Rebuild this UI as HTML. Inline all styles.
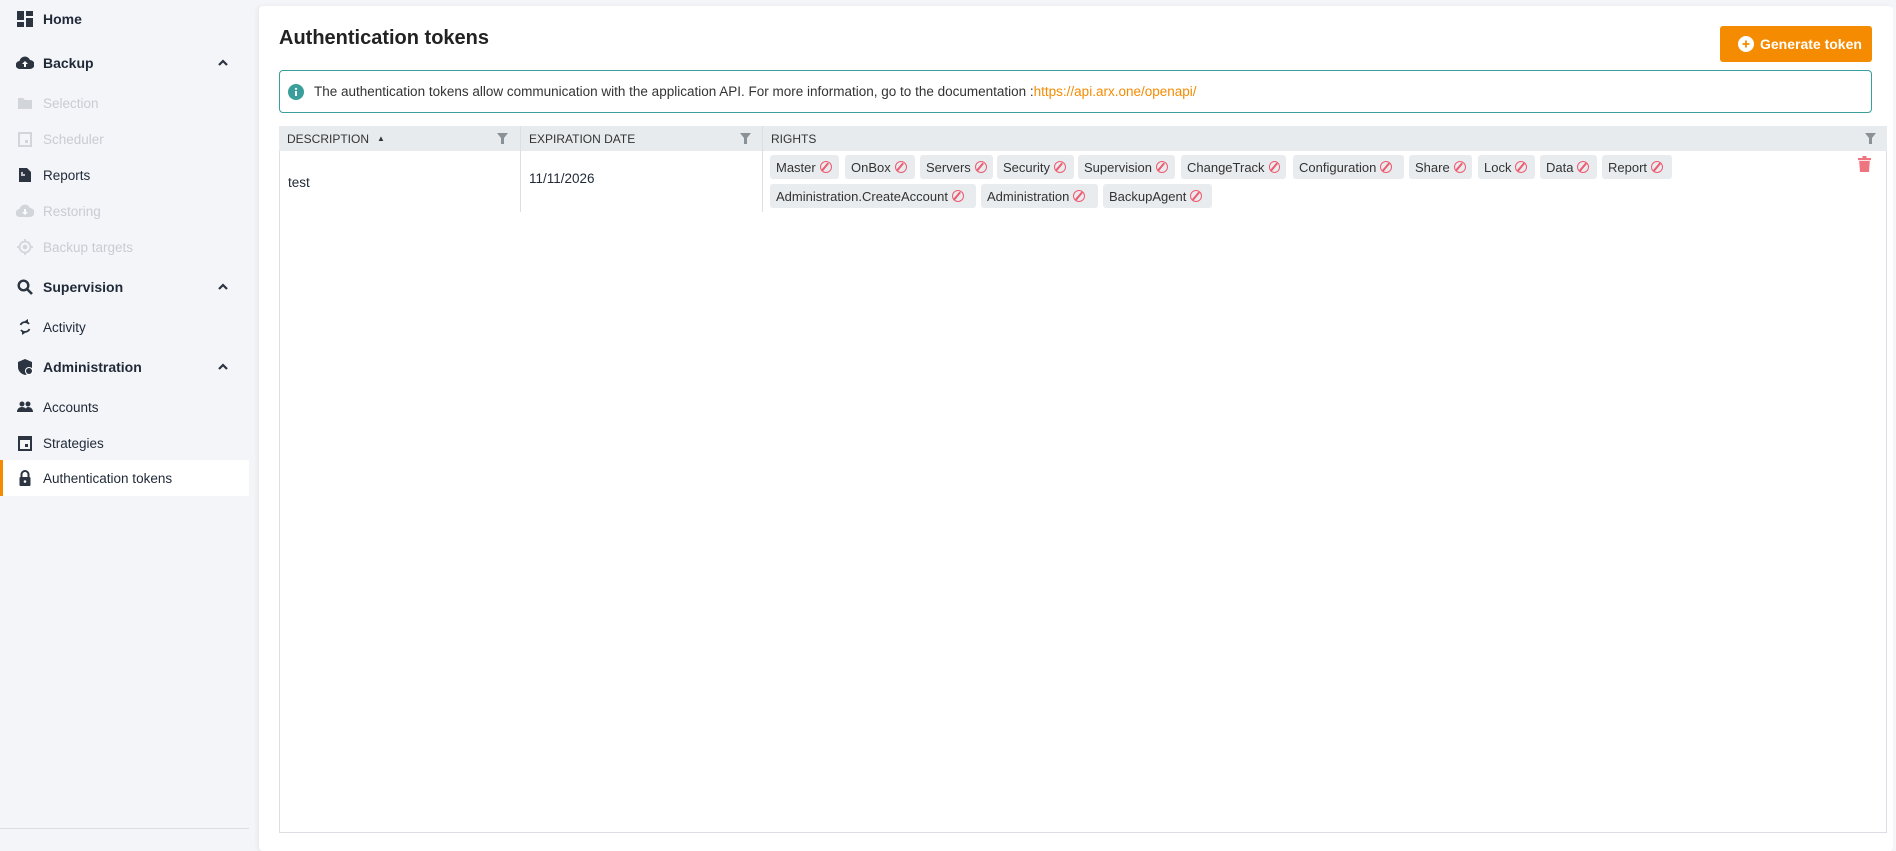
<!DOCTYPE html>
<html><head><meta charset="utf-8"><style>
*{box-sizing:border-box;margin:0;padding:0}
body{width:1896px;height:842px;background:#f4f5f9;font-family:"Liberation Sans",sans-serif;color:#1f2937;position:relative;overflow:hidden;font-size:13.5px}
.si{position:absolute;left:0;width:249px;height:36px;display:flex;align-items:center}
.si svg{position:absolute;left:16px;width:18px;height:18px}
.si span{position:absolute;left:43px}
.si.b span{font-weight:bold;font-size:14px}
.si.d{color:#c8ccd2}
.si .chev{position:absolute;left:217px;width:12px;height:12px}
.active{background:#fff;border-left:3px solid #f58b00}
.card{position:absolute;left:259px;top:6px;width:1634px;height:845px;background:#fff;border-radius:4px;box-shadow:-2px 0 4px rgba(0,0,0,.05)}
.chip{position:absolute;height:24px;background:#e9ecef;border-radius:3px;font-size:13px;display:flex;align-items:center;padding:0 6px;white-space:nowrap;color:#333}
.chip i{display:inline-block;width:12px;height:12px;border:1.7px solid #ee5a6f;border-radius:50%;margin-left:4px;position:relative}
.chip i:after{content:"";position:absolute;left:3.5px;top:-0.5px;width:1.7px;height:10px;background:#ee5a6f;transform:rotate(40deg)}
.th{position:absolute;top:126px;height:25px;background:#e8ebee;font-size:12px;color:#333;display:flex;align-items:center;padding-left:8px}
.flt{position:absolute;top:133px;width:11px;height:11px}
</style></head><body>
<div class="si b" style="top:1px"><svg viewBox="0 0 18 18"><rect x="1" y="1" width="7" height="9" fill="#2b3440"/><rect x="10" y="1" width="7" height="5" fill="#2b3440"/><rect x="1" y="12" width="7" height="5" fill="#2b3440"/><rect x="10" y="8" width="7" height="9" fill="#2b3440"/></svg><span>Home</span></div>
<div class="si b" style="top:45px"><svg viewBox="0 0 18 18"><path d="M4 15a4 4 0 0 1-.5-8A5.5 5.5 0 0 1 14 6a4.5 4.5 0 0 1 0 9z" fill="#2b3440"/><path d="M9 7l-3 3h2v3h2v-3h2z" fill="#fff"/></svg><span>Backup</span><svg class="chev" viewBox="0 0 12 12"><path d="M2 8l4-4 4 4" stroke="#2b3440" stroke-width="2.2" fill="none"/></svg></div>
<div class="si d" style="top:85px"><svg viewBox="0 0 18 18"><path d="M2 4h5l2 2h7v9H2z" fill="#d2d5da"/></svg><span>Selection</span></div>
<div class="si d" style="top:121px"><svg viewBox="0 0 18 18"><rect x="3" y="3" width="12" height="13" fill="none" stroke="#d2d5da" stroke-width="2"/><rect x="9" y="10" width="3" height="3" fill="#d2d5da"/></svg><span>Scheduler</span></div>
<div class="si" style="top:157px"><svg viewBox="0 0 18 18"><path d="M3 2h8l4 4v10H3z" fill="#2b3440"/><path d="M6 6v4M8 8v2" stroke="#fff" stroke-width="1.4"/></svg><span>Reports</span></div>
<div class="si d" style="top:193px"><svg viewBox="0 0 18 18"><path d="M4 15a4 4 0 0 1-.5-8A5.5 5.5 0 0 1 14 6a4.5 4.5 0 0 1 0 9z" fill="#d2d5da"/><path d="M9 13l-3-3h2V7h2v3h2z" fill="#fff"/></svg><span>Restoring</span></div>
<div class="si d" style="top:229px"><svg viewBox="0 0 18 18"><circle cx="9" cy="9" r="5.5" fill="none" stroke="#d2d5da" stroke-width="1.8"/><circle cx="9" cy="9" r="2.3" fill="#d2d5da"/><path d="M9 1v2M9 15v2M1 9h2M15 9h2" stroke="#d2d5da" stroke-width="1.8"/></svg><span>Backup targets</span></div>
<div class="si b" style="top:269px"><svg viewBox="0 0 18 18"><circle cx="7.5" cy="7.5" r="4.8" fill="none" stroke="#2b3440" stroke-width="2.4"/><path d="M11 11l5 5" stroke="#2b3440" stroke-width="2.6"/></svg><span>Supervision</span><svg class="chev" viewBox="0 0 12 12"><path d="M2 8l4-4 4 4" stroke="#2b3440" stroke-width="2.2" fill="none"/></svg></div>
<div class="si" style="top:309px"><svg viewBox="0 0 18 18"><path d="M13 6A5 5 0 0 0 4.5 7M5 12a5 5 0 0 0 8.5-1" stroke="#2b3440" stroke-width="1.8" fill="none"/><path d="M9 3l3-2v5z M9 15l-3 2v-5z" fill="#2b3440"/></svg><span>Activity</span></div>
<div class="si b" style="top:349px"><svg viewBox="0 0 18 18"><path d="M9 1l7 3v5c0 4-3 7-7 8-4-1-7-4-7-8V4z" fill="#2b3440"/><circle cx="13" cy="13" r="4" fill="#fff"/><circle cx="13" cy="13" r="3" fill="#2b3440"/></svg><span>Administration</span><svg class="chev" viewBox="0 0 12 12"><path d="M2 8l4-4 4 4" stroke="#2b3440" stroke-width="2.2" fill="none"/></svg></div>
<div class="si" style="top:389px"><svg viewBox="0 0 18 18"><circle cx="6" cy="6" r="2.5" fill="#2b3440"/><circle cx="12" cy="6" r="2.5" fill="#2b3440"/><path d="M1 14c0-3 2-5 5-5s5 2 5 5zM9 14c0-3 1.5-5 3-5 3 0 5 2 5 5z" fill="#2b3440"/></svg><span>Accounts</span></div>
<div class="si" style="top:425px"><svg viewBox="0 0 18 18"><rect x="3" y="3" width="12" height="13" fill="none" stroke="#2b3440" stroke-width="2"/><rect x="3" y="3" width="12" height="3" fill="#2b3440"/><rect x="9" y="10" width="3" height="3" fill="#2b3440"/></svg><span>Strategies</span></div>
<div class="si active" style="top:460px"><svg viewBox="0 0 18 18" style="left:13px"><path d="M5.5 8V5.5a3.5 3.5 0 0 1 7 0V8" stroke="#2b3440" stroke-width="2" fill="none"/><rect x="3.5" y="8" width="11" height="9" rx="1" fill="#2b3440"/><circle cx="9" cy="12.5" r="1.3" fill="#fff"/></svg><span style="left:40px">Authentication tokens</span></div>
<div style="position:absolute;left:0;top:828px;width:249px;height:1px;background:#dcdee3"></div>

<div class="card"></div>
<div style="position:absolute;left:279px;top:27px;font-size:20px;font-weight:bold;color:#222">Authentication tokens</div>
<div style="position:absolute;left:1720px;top:26px;width:152px;height:36px;background:#f58b00;border-radius:3px;color:#fff;font-weight:bold;font-size:14px;display:flex;align-items:center"><svg width="16" height="16" viewBox="0 0 16 16" style="margin-left:18px;margin-right:6px"><circle cx="8" cy="8" r="8" fill="#fff"/><path d="M4.5 8h7M8 4.5v7" stroke="#f58b00" stroke-width="1.8"/></svg>Generate token</div>
<div style="position:absolute;left:279px;top:70px;width:1593px;height:43px;border:1px solid #3a9e9a;border-radius:4px;display:flex;align-items:center;font-size:13.5px;color:#333"><svg width="16" height="16" viewBox="0 0 16 16" style="margin-left:8px;margin-right:10px"><circle cx="8" cy="8" r="8" fill="#3a9e9a"/><rect x="7" y="7" width="2" height="5" fill="#fff"/><circle cx="8" cy="4.8" r="1.1" fill="#fff"/></svg>The authentication tokens allow communication with the application API. For more information, go to the documentation :<span style="color:#f58b00">https://api.arx.one/openapi/</span></div>

<div style="position:absolute;left:279px;top:126px;width:1608px;height:707px;border:1px solid #dcdee3;border-top:0"></div>
<div class="th" style="left:279px;width:241px">DESCRIPTION <span style="font-size:8px;margin-left:8px">▲</span></div>
<div class="th" style="left:521px;width:241px">EXPIRATION DATE</div>
<div class="th" style="left:763px;width:1124px">RIGHTS</div>
<div style="position:absolute;left:520px;top:126px;width:1px;height:86px;background:#dcdee3"></div>
<div style="position:absolute;left:762px;top:126px;width:1px;height:86px;background:#dcdee3"></div>
<svg class="flt" style="left:497px" viewBox="0 0 11 11"><path d="M0 0h11L7 5v6H4V5z" fill="#8a9197"/></svg>
<svg class="flt" style="left:740px" viewBox="0 0 11 11"><path d="M0 0h11L7 5v6H4V5z" fill="#8a9197"/></svg>
<svg class="flt" style="left:1865px" viewBox="0 0 11 11"><path d="M0 0h11L7 5v6H4V5z" fill="#8a9197"/></svg>
<div style="position:absolute;left:288px;top:175px;font-size:13.5px">test</div>
<div style="position:absolute;left:529px;top:171px;font-size:13.5px">11/11/2026</div>

<div class="chip" style="left:770px;top:155px;width:69px">Master<i></i></div>
<div class="chip" style="left:845px;top:155px;width:70px">OnBox<i></i></div>
<div class="chip" style="left:920px;top:155px;width:73px">Servers<i></i></div>
<div class="chip" style="left:997px;top:155px;width:77px">Security<i></i></div>
<div class="chip" style="left:1078px;top:155px;width:97px">Supervision<i></i></div>
<div class="chip" style="left:1181px;top:155px;width:105px">ChangeTrack<i></i></div>
<div class="chip" style="left:1293px;top:155px;width:111px">Configuration<i></i></div>
<div class="chip" style="left:1409px;top:155px;width:63px">Share<i></i></div>
<div class="chip" style="left:1478px;top:155px;width:57px">Lock<i></i></div>
<div class="chip" style="left:1540px;top:155px;width:57px">Data<i></i></div>
<div class="chip" style="left:1602px;top:155px;width:70px">Report<i></i></div>
<div class="chip" style="left:770px;top:184px;width:206px">Administration.CreateAccount<i></i></div>
<div class="chip" style="left:981px;top:184px;width:117px">Administration<i></i></div>
<div class="chip" style="left:1103px;top:184px;width:109px">BackupAgent<i></i></div>
<svg style="position:absolute;left:1858px;top:156px" width="13" height="16" viewBox="0 0 13 16"><rect x="0" y="2" width="13" height="2.2" fill="#ee7480"/><rect x="4.5" y="0" width="4" height="2" fill="#ee7480"/><path d="M1.2 5h10.6l-.8 11H2z" fill="#ee7480"/></svg>
</body></html>
